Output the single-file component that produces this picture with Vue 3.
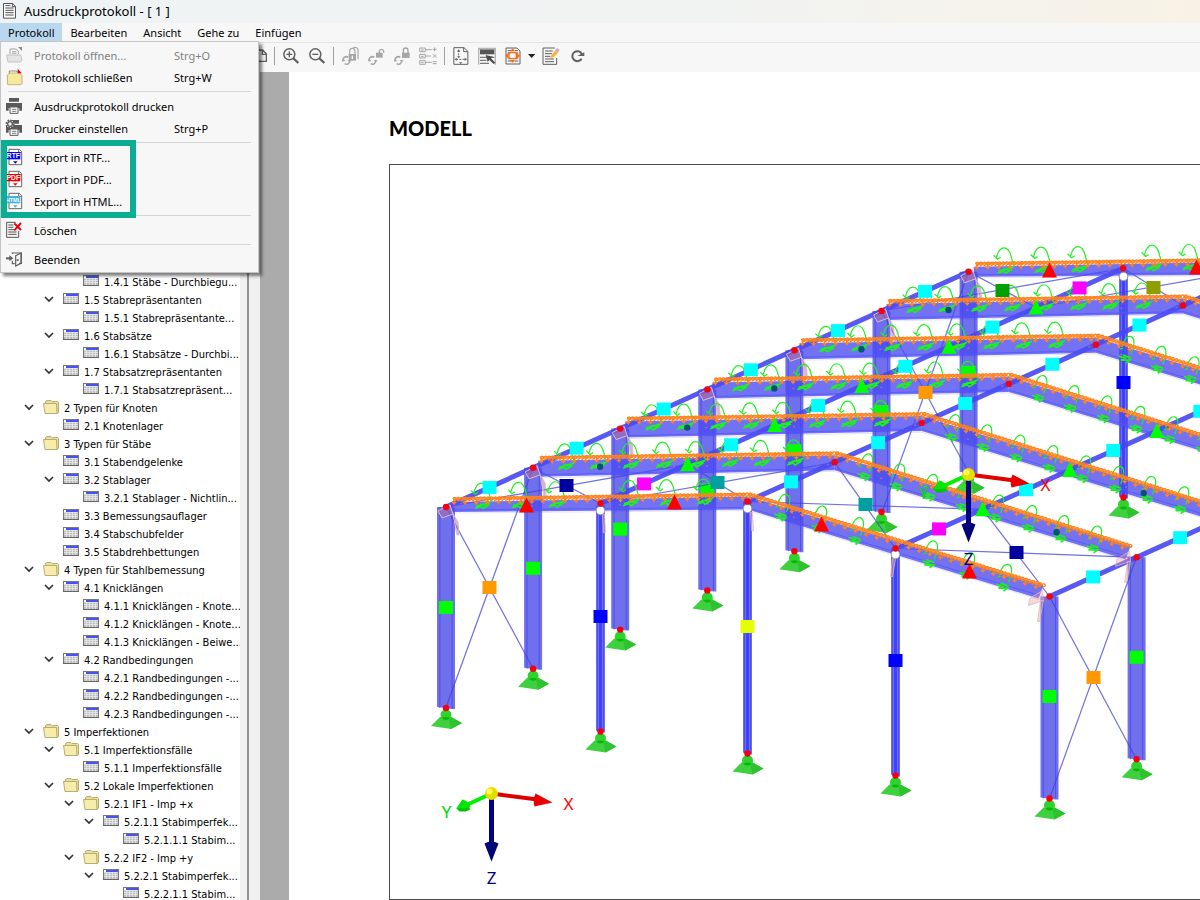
<script setup>
const menus = ['Protokoll', 'Bearbeiten', 'Ansicht', 'Gehe zu', 'Einfügen']

const menuGroups = [
  [
    { icon: 'open', label: 'Protokoll öffnen...', key: 'Strg+O', off: true },
    { icon: 'close', label: 'Protokoll schließen', key: 'Strg+W' }
  ],
  [
    { icon: 'print', label: 'Ausdruckprotokoll drucken' },
    { icon: 'setup', label: 'Drucker einstellen', key: 'Strg+P' }
  ],
  [
    { icon: 'rtf', label: 'Export in RTF...', tag: 'RTF', color: '#0000f5' },
    { icon: 'pdf', label: 'Export in PDF...', tag: 'PDF', color: '#f50000' },
    { icon: 'html', label: 'Export in HTML...', tag: 'HTML', color: '#45b0e0' }
  ],
  [{ icon: 'delete', label: 'Löschen' }],
  [{ icon: 'exit', label: 'Beenden' }]
]

// [level, expandable, kind, text]
const tree = [
  [2, 0, 't', '1.4.1 Stäbe - Durchbiegu...'],
  [1, 1, 't', '1.5 Stabrepräsentanten'],
  [2, 0, 't', '1.5.1 Stabrepräsentante...'],
  [1, 1, 't', '1.6 Stabsätze'],
  [2, 0, 't', '1.6.1 Stabsätze - Durchbi...'],
  [1, 1, 't', '1.7 Stabsatzrepräsentanten'],
  [2, 0, 't', '1.7.1 Stabsatzrepräsent...'],
  [0, 1, 'f', '2 Typen für Knoten'],
  [1, 0, 't', '2.1 Knotenlager'],
  [0, 1, 'f', '3 Typen für Stäbe'],
  [1, 0, 't', '3.1 Stabendgelenke'],
  [1, 1, 't', '3.2 Stablager'],
  [2, 0, 't', '3.2.1 Stablager - Nichtlin...'],
  [1, 0, 't', '3.3 Bemessungsauflager'],
  [1, 0, 't', '3.4 Stabschubfelder'],
  [1, 0, 't', '3.5 Stabdrehbettungen'],
  [0, 1, 'f', '4 Typen für Stahlbemessung'],
  [1, 1, 't', '4.1 Knicklängen'],
  [2, 0, 't', '4.1.1 Knicklängen - Knote...'],
  [2, 0, 't', '4.1.2 Knicklängen - Knote...'],
  [2, 0, 't', '4.1.3 Knicklängen - Beiwe...'],
  [1, 1, 't', '4.2 Randbedingungen'],
  [2, 0, 't', '4.2.1 Randbedingungen -...'],
  [2, 0, 't', '4.2.2 Randbedingungen -...'],
  [2, 0, 't', '4.2.3 Randbedingungen -...'],
  [0, 1, 'f', '5 Imperfektionen'],
  [1, 1, 'f', '5.1 Imperfektionsfälle'],
  [2, 0, 't', '5.1.1 Imperfektionsfälle'],
  [1, 1, 'f', '5.2 Lokale Imperfektionen'],
  [2, 1, 'f', '5.2.1 IF1 - Imp +x'],
  [3, 1, 't', '5.2.1.1 Stabimperfek...'],
  [4, 0, 't', '5.2.1.1.1 Stabim...'],
  [2, 1, 'f', '5.2.2 IF2 - Imp +y'],
  [3, 1, 't', '5.2.2.1 Stabimperfek...'],
  [4, 0, 't', '5.2.2.1.1 Stabim...']
]

// Hall geometry: seven portal frames, each shifted by the same vector
const DX = 87.1
const DY = -39.2
const at = (p, i) => [p[0] + DX * i, p[1] + DY * i]
const mid = (a, b) => [(a[0] + b[0]) / 2, (a[1] + b[1]) / 2]
const poly = (pts) => pts.map((p) => p.join(',')).join(' ')
const E = [445.5, 506.5]
const M = [600, 503]
const R = [747, 501]
const N = [895, 548]
const F = [1049, 596]
const far = [6, 5, 4, 3, 2, 1, 0]

const columns = []
const supports = []
const addColumn = (x, y, len, w, color, my) => {
  columns.push({ x, y, len, w, color, my: my ?? y + len / 2 })
  supports.push([x, y + len])
}
far.forEach((i) => {
  const e = at(E, i)
  addColumn(e[0], e[1], 201, 9, '#00ff00')
  if (i < 2) {
    const f = at(F, i)
    addColumn(f[0], f[1], 202, 9, '#00ff00', f[1] + 100)
  }
})
addColumn(1123, 271, 226, 4.5, '#0000ff', 382)
addColumn(600, 505, 226, 4.5, '#0000ff', 616)
addColumn(747, 501, 252, 4.5, '#e5ff00', 626)
addColumn(895, 548, 227, 4.5, '#0000ff', 660)

const purlins = [E, M, R, N, F].map((p) => [p, at(p, 6)])

const beams = far.map((i) => {
  const e = at(E, i)
  const r = at(R, i)
  const f = at(F, i)
  const end = i === 0 || i === 6
  const d = end ? 5 : 9
  const t = end ? 5 : 7
  return {
    left: poly([[e[0] + 5, e[1] - t], [r[0], r[1] - t], [r[0], r[1] + 8], [e[0] + 6, e[1] + d]]),
    right: poly([[r[0], r[1] - t], [f[0] - 6, f[1] - 11], [f[0] - 11, f[1] + 2], [r[0], r[1] + 8]]),
    axis: poly([[e[0] + 8, e[1]], [r[0], r[1] + 2], [f[0] - 8, f[1] - 4]]),
    seam: poly([[e[0] + 8, e[1] + d - 2], [r[0], r[1] + 6], [f[0] - 10, f[1] - 1]]),
    line: poly([[e[0] + 8, e[1] + 1 + d], [r[0], r[1] + 9], [f[0] - 10, f[1] + 3]])
  }
})

function loadPath(a, b) {
  const len = Math.hypot(b[0] - a[0], b[1] - a[1])
  const ux = (b[0] - a[0]) / len
  const uy = (b[1] - a[1]) / len
  let d = ''
  const f = (v) => v.toFixed(1)
  for (let s = 0, k = 0; s < len; s += 3.7, k++) {
    const x = a[0] + ux * s
    const y = a[1] + uy * s
    d += `M${f(x)} ${f(y)}a1.7 1.5 0 1 1 3 1l-2.6 1.4`
    if (k % 3 === 0) d += `M${f(x + 1)} ${f(y)}v5l-2-2m2 2l2-2`
  }
  return d
}

const lineLoads = far.flatMap((i) => {
  const e = at(E, i)
  const r = at(R, i)
  const f = at(F, i)
  const lift = i === 0 || i === 6 ? 8 : 10
  return [
    [[e[0] + 7, e[1] - lift], [r[0] - 1, r[1] - lift + 1]],
    [[r[0] + 1, r[1] - lift + 1], [f[0] - 7, f[1] - 11]]
  ].map(([a, b]) => ({ base: `M${a}L${b}`, coil: loadPath(a, b) }))
})

const moments = []
far.forEach((i) => {
  const end = i === 0 || i === 6
  const steps = end ? [37, 74, 111, 185, 222, 259] : [33, 65, 98, 131, 164, 197, 229, 262]
  const r = at(R, i)
  const e = at(E, i)
  steps.forEach((s) => {
    moments.push({ x: e[0] + s, y: e[1] - (s * 5.5) / 302, side: 'l' })
    moments.push({ x: r[0] + s - 2, y: r[1] + s * 0.315 + 1, side: 'r' })
  })
})

const braces = [
  [E, [445.5 + DX, 668]], [[445.5, 707], at(E, 1)],
  [at(E, 5), [968, 472]], [[881, 513], at(E, 6)],
  [F, [1136, 759]], [[1049, 798], at(F, 1)],
  [E, at(M, 1)], [at(E, 1), M], [M, at(R, 1)], [at(M, 1), R],
  [R, at(N, 1)], [at(R, 1), N], [N, at(F, 1)], [at(N, 1), F],
  [at(E, 5), at(M, 6)], [at(E, 6), at(M, 5)], [at(M, 5), at(R, 6)], [at(M, 6), at(R, 5)]
]

const squares = []
const sq = (p, c) => squares.push({ x: p[0], y: p[1], c })
for (let i = 0; i < 6; i++) {
  sq(mid(at(E, i), at(E, i + 1)), '#00ffff')
  sq(mid(at(M, i), at(M, i + 1)), i === 0 || i === 5 ? '#ff00ff' : '#00ffff')
  sq(mid(at(R, i), at(R, i + 1)), '#00ffff')
  sq(mid(at(N, i), at(N, i + 1)), i === 0 ? '#ff00ff' : '#00ffff')
  sq(mid(at(F, i), at(F, i + 1)), '#00ffff')
}
sq([489, 587], '#ff9900')
sq([925, 392], '#ff9900')
sq([1093, 677], '#ff9900')
sq([566, 485], '#0000a0')
sq([717, 482], '#00a0a0')
sq([865, 504], '#00a0a0')
sq([1016, 552], '#0000a0')
sq([1002, 290], '#00a000')
sq([1153, 287], '#8f9f00')

const triangles = []
for (let i = 1; i < 6; i++) {
  triangles.push({ p: at(M, i), c: '#00ff00' }, { p: at(N, i), c: '#00ff00' })
}
;[[526, 505], [674, 502], [821, 524], [969, 571], [1049, 270], [1196, 267]].forEach((p) =>
  triangles.push({ p, c: '#ff0000' })
)

const dots = []
for (let i = 1; i < 6; i++) {
  const e = at(E, i)
  const f = at(F, i)
  dots.push([e[0] + 67, e[1] - 1], [f[0] - 80, f[1] - 25])
}

const nodes = []
far.forEach((i) => nodes.push(at(E, i), at(R, i), at(F, i)))
nodes.push(M, N, at(M, 6))
supports.forEach((s) => nodes.push(s))

const leftPlates = far.map((i) => at(E, i))
const rightPlates = [0, 1].map((i) => at(F, i))
const rings = [[600, 510], [747, 508], [895, 554], [1123, 276]]
const triads = [[491, 793], [968, 474]]
</script>

<template>
  <div class="app">
    <header class="title">
      <svg width="15" height="18" viewBox="9 6 45 54" fill="none" stroke="#555" stroke-width="3">
        <path d="M10.500 10.500H38L46.500 19V54.500H10.500Z" fill="#fff" />
        <path d="M37 10V20H47M16 17H31M16 24H41M16 31H41M16 38H41M16 45H41" />
      </svg>
      <h1>Ausdruckprotokoll - [ 1 ]</h1>
    </header>

    <nav class="menubar" aria-label="Menü">
      <button v-for="(m, i) in menus" :key="m" type="button" :class="{ active: i === 0 }">{{ m }}</button>
    </nav>

    <div class="toolbar" role="toolbar">
      <button type="button" class="cut" aria-label="Seite">
        <svg width="18" height="20" viewBox="8 48 54 60" fill="none" stroke="#606060" stroke-width="4"><path d="M16 60H37L48 71V94H16ZM36 60V73H48" /></svg>
      </button>
      <i class="sep"></i>
      <button type="button" aria-label="Vergrößern">
        <svg width="20" height="20" viewBox="93 48 60 60" fill="none" stroke="#606060"><circle cx="118" cy="73" r="16.500" stroke-width="4.500" /><path d="M118 64V82M109 73H127" stroke-width="4" /><path d="M129 84L145 99" stroke-width="7" /></svg>
      </button>
      <button type="button" aria-label="Verkleinern">
        <svg width="20" height="20" viewBox="171 48 60 60" fill="none" stroke="#606060"><circle cx="196" cy="73" r="16.500" stroke-width="4.500" /><path d="M187 73H205" stroke-width="4" /><path d="M207 84L223 99" stroke-width="7" /></svg>
      </button>
      <i class="sep"></i>
      <button v-for="n in 3" :key="n" type="button" disabled aria-label="Sperre">
        <svg width="20" height="20" viewBox="271 48 60 60" fill="none" stroke="#a6a6a6">
          <path d="M281 94A10 10 0 0 1 296 82M300 90A10 10 0 0 1 285 101" stroke-width="4.500" />
          <path d="M276 94H288L281 87ZM293 91H306L300 97Z" fill="#a6a6a6" stroke="none" />
          <template v-if="n === 1"><path d="M300 72V64A8 9 0 0 1 316 64V72M310 55A9 9 0 0 1 325 64V88" stroke-width="3.500" /><rect x="297" y="72" width="22" height="20" fill="#a6a6a6" stroke="none" /><path d="M308 77V87" stroke="#f7f7f7" stroke-width="4" /></template>
          <template v-else-if="n === 2"><path d="M311 69V63A7 8 0 0 1 324 63V68" stroke-width="4" /><rect x="301" y="68" width="20" height="15" fill="#a6a6a6" stroke="none" /></template>
          <template v-else><path d="M305 69V62A7 8 0 0 1 319 62V69" stroke-width="4" /><rect x="301" y="68" width="23" height="16" fill="#a6a6a6" stroke="none" /></template>
        </svg>
      </button>
      <button type="button" disabled aria-label="Tabelle berechnen">
        <svg width="20" height="20" viewBox="504 48 60 60" fill="none" stroke="#a6a6a6" stroke-width="3"><path d="M509 54H526V65H509ZM509 73H526V84H509ZM509 92H526V103H509ZM526 59H545M526 78H543M526 97H545M513 60H521M513 79H521M513 98H521M548 58H560M554 52V64M549 73L559 83M559 73L549 83M548 95H560M548 101H560" /></svg>
      </button>
      <i class="sep"></i>
      <button type="button" aria-label="Seite einrichten">
        <svg width="20" height="20" viewBox="602 48 60 60" fill="none" stroke="#606060" stroke-width="3"><path d="M610.500 53H641L652.500 64V103H610.500ZM640 53V65H652" /><path d="M625 60V83M617 88H646" stroke-dasharray="6 4" /><path d="M620 65L625 58L630 65ZM620 79L625 84L630 79ZM619 83L613 88L619 93ZM643 83L650 88L643 93ZM626 97L631 102L636 97Z" fill="#606060" stroke="none" /></svg>
      </button>
      <button type="button" aria-label="Kopfzeile">
        <svg width="20" height="20" viewBox="681 48 60 60"><path d="M684 53H738V104H734V60H688V104H684Z" fill="#b5b5b5" /><path d="M690 59H733V73H690Z" fill="#555" /><path d="M690 82H711M690 91H709M690 100H717M719 82H733" stroke="#777" stroke-width="4" /><path d="M707 75L729 80L723 85L736 98L731 102L718 90L713 96Z" fill="#4d4d4d" /></svg>
      </button>
      <button type="button" aria-label="Einpassen">
        <svg width="20" height="20" viewBox="758 48 60 60" fill="none" stroke="#606060" stroke-width="3"><path d="M767 54H800L809 63V102H767Z" /><path d="M772 62H783M772 69H780M772 84H780M772 93H783M794 62H803M796 69H804M796 84H804M793 93H804" /><path d="M776 68H798V86H776Z" stroke="#ff6a13" stroke-width="4" /><path d="M779 64L787 55L795 64ZM779 90L787 98L795 90ZM774 69L765 77L774 85ZM800 69L809 77L800 85Z" fill="#ff6a13" stroke="none" /></svg>
      </button>
      <button type="button" class="drop" aria-label="Weitere">
        <svg width="8" height="20" viewBox="833 48 24 60"><path d="M833 72H855L844 84Z" fill="#222" /></svg>
      </button>
      <button type="button" aria-label="Bearbeiten">
        <svg width="20" height="20" viewBox="872 48 60 60" fill="none" stroke="#606060" stroke-width="3"><path d="M913 54H878V103H919V84" /><path d="M884 63H907M884 71H905M884 79H900M884 87H911M884 95H911" /><path d="M902 77L914 62L922 69L910 82L900 84Z" fill="#f9b52e" stroke="none" /><path d="M914 62L920 54L928 60L922 69Z" fill="#d9a9b5" stroke="none" /></svg>
      </button>
      <button type="button" aria-label="Aktualisieren">
        <svg width="20" height="20" viewBox="951 48 60 60" fill="none" stroke="#606060"><path d="M995 86A15 15 0 1 1 996 73" stroke-width="6" /><path d="M982 78H1003V67Z" fill="#606060" stroke="none" /></svg>
      </button>
    </div>

    <main class="work">
      <aside class="side">
        <ul class="tree">
          <li v-for="(row, i) in tree" :key="i" :class="'lv' + row[0]">
            <button v-if="row[1]" type="button" class="chev" aria-label="Zuklappen">
              <svg width="10" height="8" viewBox="0 0 10 8" fill="none" stroke="#333" stroke-width="1.700"><path d="M1 2L5 6L9 2" /></svg>
            </button>
            <span v-else class="chev"></span>
            <svg v-if="row[2] === 't'" class="ico" width="16" height="16" viewBox="0 0 16 16">
              <rect x=".5" y="2.500" width="15" height="10" fill="#fff" stroke="#777" />
              <path d="M3 3H15V5H3Z" fill="#4455ee" />
              <path d="M1 5H15V12H1Z" fill="#bdbdbd" />
              <path d="M1 5.500H15M1 7.500H15M1 9.500H15M3.500 5V12M6.500 5V12M9.500 5V12M12.500 5V12" stroke="#eee" stroke-width=".7" />
              <path d="M0 12.500H16" stroke="#666" />
            </svg>
            <svg v-else class="ico" width="16" height="16" viewBox="0 0 16 16" fill="#f6ecab" stroke="#b8ad72">
              <path d="M2.500 14.500V2.500L4 1.500H8L9 2.500H14.500L15.500 3.500V13L14.500 14.500Z" fill="#eadf95" />
              <path d="M.5 4.500H13.500L14 14.500H2Z" />
            </svg>
            <span class="name">{{ row[3] }}</span>
          </li>
        </ul>
        <div class="scroll"></div>
      </aside>
      <div class="split"></div>
      <div class="gutter"></div>

      <section class="page">
        <h2>MODELL</h2>
        <div class="figure">
          <svg class="model" viewBox="389.500 164.500 810 734" preserveAspectRatio="xMinYMin slice" role="img" aria-label="Hallenmodell">
            <g v-for="(s, i) in supports" :key="'s' + i" :transform="`translate(${s[0]} ${s[1]})`">
              <path d="M-15 18L-6 9H5L16 15L5 21Z" fill="#3fd03f" />
              <path d="M5 9L16 15L5 21L3 12Z" fill="#2fc22f" />
              <circle cy="7" r="5.500" fill="#2fd32f" />
              <path d="M-4 10A6 3 0 0 1 4 10A5 5 0 0 1 -4 10Z" fill="#08b808" />
            </g>
            <g v-for="(c, i) in columns" :key="'c' + i" fill="#4040e6">
              <path :d="`M${c.x - c.w} ${c.y}H${c.x + c.w}V${c.y + c.len + 1}H${c.x + c.w - 3}L${c.x - c.w} ${c.y + c.len - 1}Z`" fill-opacity=".75" />
              <path :d="`M${c.x - c.w * 0.68} ${c.y}v${c.len}M${c.x + c.w * 0.68} ${c.y}v${c.len}`" stroke="#3c3cf4" stroke-opacity=".65" />
              <path v-if="c.w < 6" :d="`M${c.x} ${c.y}v${c.len}`" stroke="#4040ff" stroke-width="3" />
              <rect :x="c.x - 7" :y="c.my - 6.500" width="14" height="13" :fill="c.color" />
            </g>
            <path v-for="(p, i) in purlins" :key="'p' + i" :d="`M${p[0]}L${p[1]}`" stroke="#4646f2" stroke-width="5" stroke-opacity=".9" />
            <path v-for="(b, i) in braces" :key="'b' + i" :d="`M${b[0]}L${b[1]}`" stroke="#4040d8" stroke-opacity=".75" stroke-width="1.200" />
            <g v-for="(b, i) in beams" :key="'m' + i">
              <polygon :points="b.left" fill="#4a4af4" fill-opacity=".78" />
              <polygon :points="b.right" fill="#4a4aee" fill-opacity=".78" />
              <polyline :points="b.axis" fill="none" stroke="#8a70c0" stroke-dasharray="2 9" stroke-width="1.500" />
              <polyline :points="b.seam" fill="none" stroke="#5555ff" stroke-opacity=".8" />
              <polyline :points="b.line" fill="none" stroke="#4040e6" stroke-opacity=".15" />
            </g>
            <g fill="#b46a96" fill-opacity=".5" stroke="#d8c0cc">
              <path v-for="(p, i) in leftPlates" :key="'l' + i" :transform="`translate(${p[0]} ${p[1]})`" d="M-8 4L4 -2L7 7L-4 11ZM7 7L11 28H13L12 15Z" />
            </g>
            <g fill="#e89aa8" fill-opacity=".4" stroke="#dbb" stroke-width=".8">
              <path v-for="(p, i) in rightPlates" :key="'r' + i" :transform="`translate(${p[0]} ${p[1]})`" d="M-20 2L-7 -6L-6 4L-21 9ZM-9 4L-12 25H-10L-6 4Z" />
              <path d="M602 514L603 532H605L604 514ZM750 512L751 530H753L752 512ZM892 558L890 576H892L895 558Z" />
            </g>
            <g fill="none" stroke="#1ef01e" stroke-width="1.200">
              <g v-for="(m, i) in moments" :key="'t' + i" :transform="`translate(${m.x} ${m.y})`">
                <template v-if="m.side === 'l'">
                  <path d="M-9 -14C-6 -26 3 -27 6 -13L8 -6M-12 -16L-8 -12L-5 -14" />
                  <path d="M-8 2L-2 0L0 2L5 -1L-3 -2M-7 0L7 -4L3 0" stroke-width="1.700" />
                </template>
                <template v-else>
                  <path d="M-5 -9C-2 -25 11 -22 6 -8L4 -2M-7 -7L-4 -8" />
                  <path d="M-8 0L-2 2L-6 4L3 4L-1 7M-4 -1L4 2" stroke-width="1.700" />
                </template>
              </g>
            </g>
            <g v-for="(d, i) in lineLoads" :key="'q' + i" fill="none" stroke="#ff821c">
              <path :d="d.base" stroke-width="2.500" stroke-opacity=".8" />
              <path :d="d.coil" stroke-width="1.300" />
            </g>
            <rect v-for="(s, i) in squares" :key="'k' + i" :x="s.x - 7" :y="s.y - 6.500" width="14" height="13" :fill="s.c" />
            <path v-for="(t, i) in triangles" :key="'g' + i" :d="`M${t.p[0]} ${t.p[1] - 8}l7.500 15h-15Z`" :fill="t.c" />
            <circle v-for="(n, i) in dots" :key="'d' + i" :cx="n[0]" :cy="n[1]" r="3.200" fill="#06507a" />
            <circle v-for="(n, i) in rings" :key="'o' + i" :cx="n[0]" :cy="n[1]" r="4.300" fill="#fff" stroke="#999" />
            <circle v-for="(n, i) in nodes" :key="'n' + i" :cx="n[0]" :cy="n[1]" r="3.200" fill="#f40010" />
            <g v-for="(t, i) in triads" :key="'x' + i" :transform="`translate(${t[0]} ${t[1]})`">
              <path d="M0 0V52" stroke="#000080" stroke-width="5" />
              <path d="M-7 50Q0 46 7 50L0 68Z" fill="#000078" />
              <path d="M0 0L46 6" stroke="#e00000" stroke-width="4" />
              <path d="M44 0L61 9L43 13Q41 7 44 0Z" fill="#e60000" />
              <path d="M0 0L-24 11" stroke="#00f000" stroke-width="4" />
              <path d="M-29 6L-21 16L-26 18H-32L-35 15Z" fill="#00c400" />
              <path d="M-35 15L-29 6Q-22 8 -21 14Z" fill="#00e800" />
              <circle r="6.500" fill="#e6dc00" />
              <circle cx="-2" cy="-2" r="3" fill="#ffff50" />
              <text x="77" y="16" fill="#ff0000">X</text>
              <text x="-45" y="24" fill="#00d800">Y</text>
              <text x="0" y="90" fill="#000080">Z</text>
            </g>
          </svg>
        </div>
      </section>
    </main>

    <div class="popup" role="menu">
      <div v-for="(g, gi) in menuGroups" :key="gi" class="group" :class="{ marked: gi === 2 }">
        <button v-for="it in g" :key="it.label" type="button" role="menuitem" :disabled="it.off">
          <svg v-if="it.icon === 'open'" width="20" height="20" viewBox="12 136 60 60" fill="#f4f4f4" stroke="#999" stroke-width="2.500"><path d="M30 164V148H48L55 154V164M36 156H49M36 161H49" /><path d="M20 166H62L66 182L62 187H24Z" fill="#e4e4e4" stroke="#bbb" /><path d="M54 142H66V154Z" fill="#888" stroke="none" /></svg>
          <svg v-else-if="it.icon === 'close'" width="20" height="20" viewBox="12 202 60 60" stroke="#777" stroke-width="2.500" fill="#fff"><path d="M28 228V214H48L57 219V228M34 222H48" /><path d="M22 226L29 220H56L66 227V252L62 255H23Z" fill="#f3e99f" stroke="#b7a964" /><path d="M53 207V221H66L61 216Z" fill="#e00000" stroke="none" /></svg>
          <svg v-else-if="it.icon === 'print' || it.icon === 'setup'" width="20" height="20" viewBox="12 288 60 60"><path d="M27 294H57V305H27ZM18 309H66V332H58V324H26V332H18Z" fill="#5a5a5a" /><path d="M30 321H54V340H30Z" fill="#fff" stroke="#5a5a5a" stroke-width="3" /><path d="M36 328H49M36 334H49" stroke="#5a5a5a" stroke-width="2.500" /><template v-if="it.icon === 'setup'"><circle cx="30" cy="306" r="11" fill="#f7f7f7" stroke="#5a5a5a" stroke-width="5" stroke-dasharray="5 3.600" /><circle cx="30" cy="306" r="7" fill="#f7f7f7" stroke="#5a5a5a" stroke-width="4" /></template></svg>
          <svg v-else-if="it.tag" width="20" height="20" viewBox="12 22 60 60"><path d="M27 29H58L65 36V75H27Z" fill="#fff" stroke="#666" stroke-width="3" /><path d="M56 29V38H65" fill="none" stroke="#666" stroke-width="3" /><rect x="12" y="37" width="49" height="22" :fill="it.color" /><path d="M39 65H53L46 72Z" :fill="it.color" /><text class="tag" :class="{ long: it.tag.length > 3 }" x="40" y="56">{{ it.tag }}</text></svg>
          <svg v-else-if="it.icon === 'delete'" width="20" height="20" viewBox="12 100 60 60" fill="none" stroke="#555" stroke-width="3"><path d="M47 107H20V152H56V133M25 115H40M25 122H40M25 129H44M25 136H50M25 143H50" /><path d="M43 110L63 130M63 109L43 131" stroke="#f00010" stroke-width="6" /></svg>
          <svg v-else width="20" height="20" viewBox="12 187 60 60" fill="none" stroke="#606060" stroke-width="3.500"><path d="M37 202V199H64V230H57M37 222V231H44" /><path d="M47 207L63 199V230L47 238Z" /><path d="M18 215H31" stroke-width="6" /><path d="M28 206L40 215L28 224ZM50 218H56V223H50Z" fill="#606060" stroke="none" /></svg>
          <span class="lab">{{ it.label }}</span>
          <span class="key">{{ it.key }}</span>
        </button>
      </div>
    </div>
  </div>
</template>

<style>
body {
  overflow: hidden;
}
</style>

<style scoped>
.app {
  position: relative;
  display: flex;
  flex-direction: column;
  height: 100vh;
  background: #f7f7f7;
  color: #000;
  font-family: "Noto Sans", "Open Sans", sans-serif;
  font-size: 11px;
}
button {
  border: 0;
  padding: 0;
  background: none;
  font: inherit;
  color: inherit;
}
svg {
  display: block;
  flex: none;
}
.title {
  display: flex;
  align-items: center;
  gap: 6px;
  box-sizing: border-box;
  height: 23px;
  padding: 0 0 1px 3px;
  background: linear-gradient(90deg, #eef3f5, #f1f3f2 60%, #f8f2e6);
}
h1 {
  margin: 0;
  font-size: 13px;
  line-height: 18px;
  font-weight: 400;
}
.menubar {
  display: flex;
  height: 19px;
  border-bottom: 1px solid #e4e4e4;
}
.menubar button {
  padding: 0 8px;
  line-height: 19px;
}
.menubar .active {
  background: #b9d7ef;
}
.toolbar {
  display: flex;
  align-items: center;
  box-sizing: border-box;
  height: 29px;
  padding: 0 0 3px 253px;
}
.toolbar button {
  padding: 0 3px;
}
.toolbar .cut {
  padding: 0;
}
.toolbar .drop {
  padding: 0 2px;
}
.sep {
  width: 1px;
  height: 18px;
  margin: 0 3px;
  background: #a0a0a0;
}
.work {
  flex: 1;
  display: flex;
  min-height: 0;
}
.side {
  display: flex;
  width: 247px;
  flex: none;
  background: #fff;
  overflow: hidden;
}
.tree {
  flex: 1;
  min-width: 0;
  margin: 0;
  padding: 200px 0 0;
  list-style: none;
  white-space: nowrap;
  font-family: "DejaVu Sans Condensed", Roboto, sans-serif;
  font-size: 11px;
}
.tree li {
  display: flex;
  align-items: center;
  height: 18px;
  padding-left: 24px;
}
.tree .lv1 {
  padding-left: 44px;
}
.tree .lv2 {
  padding-left: 64px;
}
.tree .lv3 {
  padding-left: 84px;
}
.tree .lv4 {
  padding-left: 104px;
}
.chev {
  flex: none;
  width: 10px;
  margin-right: 9px;
}
.ico {
  margin-right: 5px;
}
.name {
  padding-top: 2px;
}
.scroll {
  width: 7px;
  background: #f0f0f0;
}
.split {
  width: 11px;
  border-left: 2px solid #919191;
  background: #f0f0f0;
  flex: none;
}
.gutter {
  width: 29px;
  background: #ababab;
  flex: none;
}
.page {
  flex: 1;
  min-width: 0;
  display: flex;
  flex-direction: column;
  padding-left: 100px;
  background: #fff;
}
h2 {
  margin: 44px 0 23px;
  font: 900 20px/25px Lato, sans-serif;
}
.figure {
  flex: 1;
  min-height: 0;
  border: 1px solid #4a4a4a;
  border-right: 0;
}
.model {
  width: 100%;
  height: 100%;
}
.model text {
  font-size: 17px;
  text-anchor: middle;
}
.tag {
  font: 700 20px "Liberation Sans", sans-serif;
  fill: #fff;
  text-anchor: middle;
}
.long {
  font-size: 16px;
}
.popup {
  position: absolute;
  left: 0;
  top: 41px;
  width: 259px;
  box-sizing: border-box;
  padding: 3px 0 1px;
  border: 1px solid #c4c4c4;
  background: #f7f7f7;
  box-shadow: 3px 3px 3px rgba(0, 0, 0, 0.5);
}
.group {
  position: relative;
}
.group + .group {
  padding-top: 7px;
}
.group + .group::before {
  content: "";
  position: absolute;
  left: 7px;
  right: 7px;
  top: 2px;
  height: 1px;
  background: #d5d5d5;
}
.group.marked {
  z-index: 1;
}
.marked::after {
  content: "";
  position: absolute;
  left: 0;
  top: 0;
  width: 123px;
  height: 66px;
  border: 6px solid #0bae93;
}
.popup button {
  display: flex;
  align-items: center;
  width: 100%;
  height: 22px;
  padding: 0 0 2px 3px;
  text-align: left;
}
.popup button:disabled {
  color: #808080;
}
.lab {
  width: 140px;
  margin-left: 10px;
  white-space: nowrap;
}
</style>
